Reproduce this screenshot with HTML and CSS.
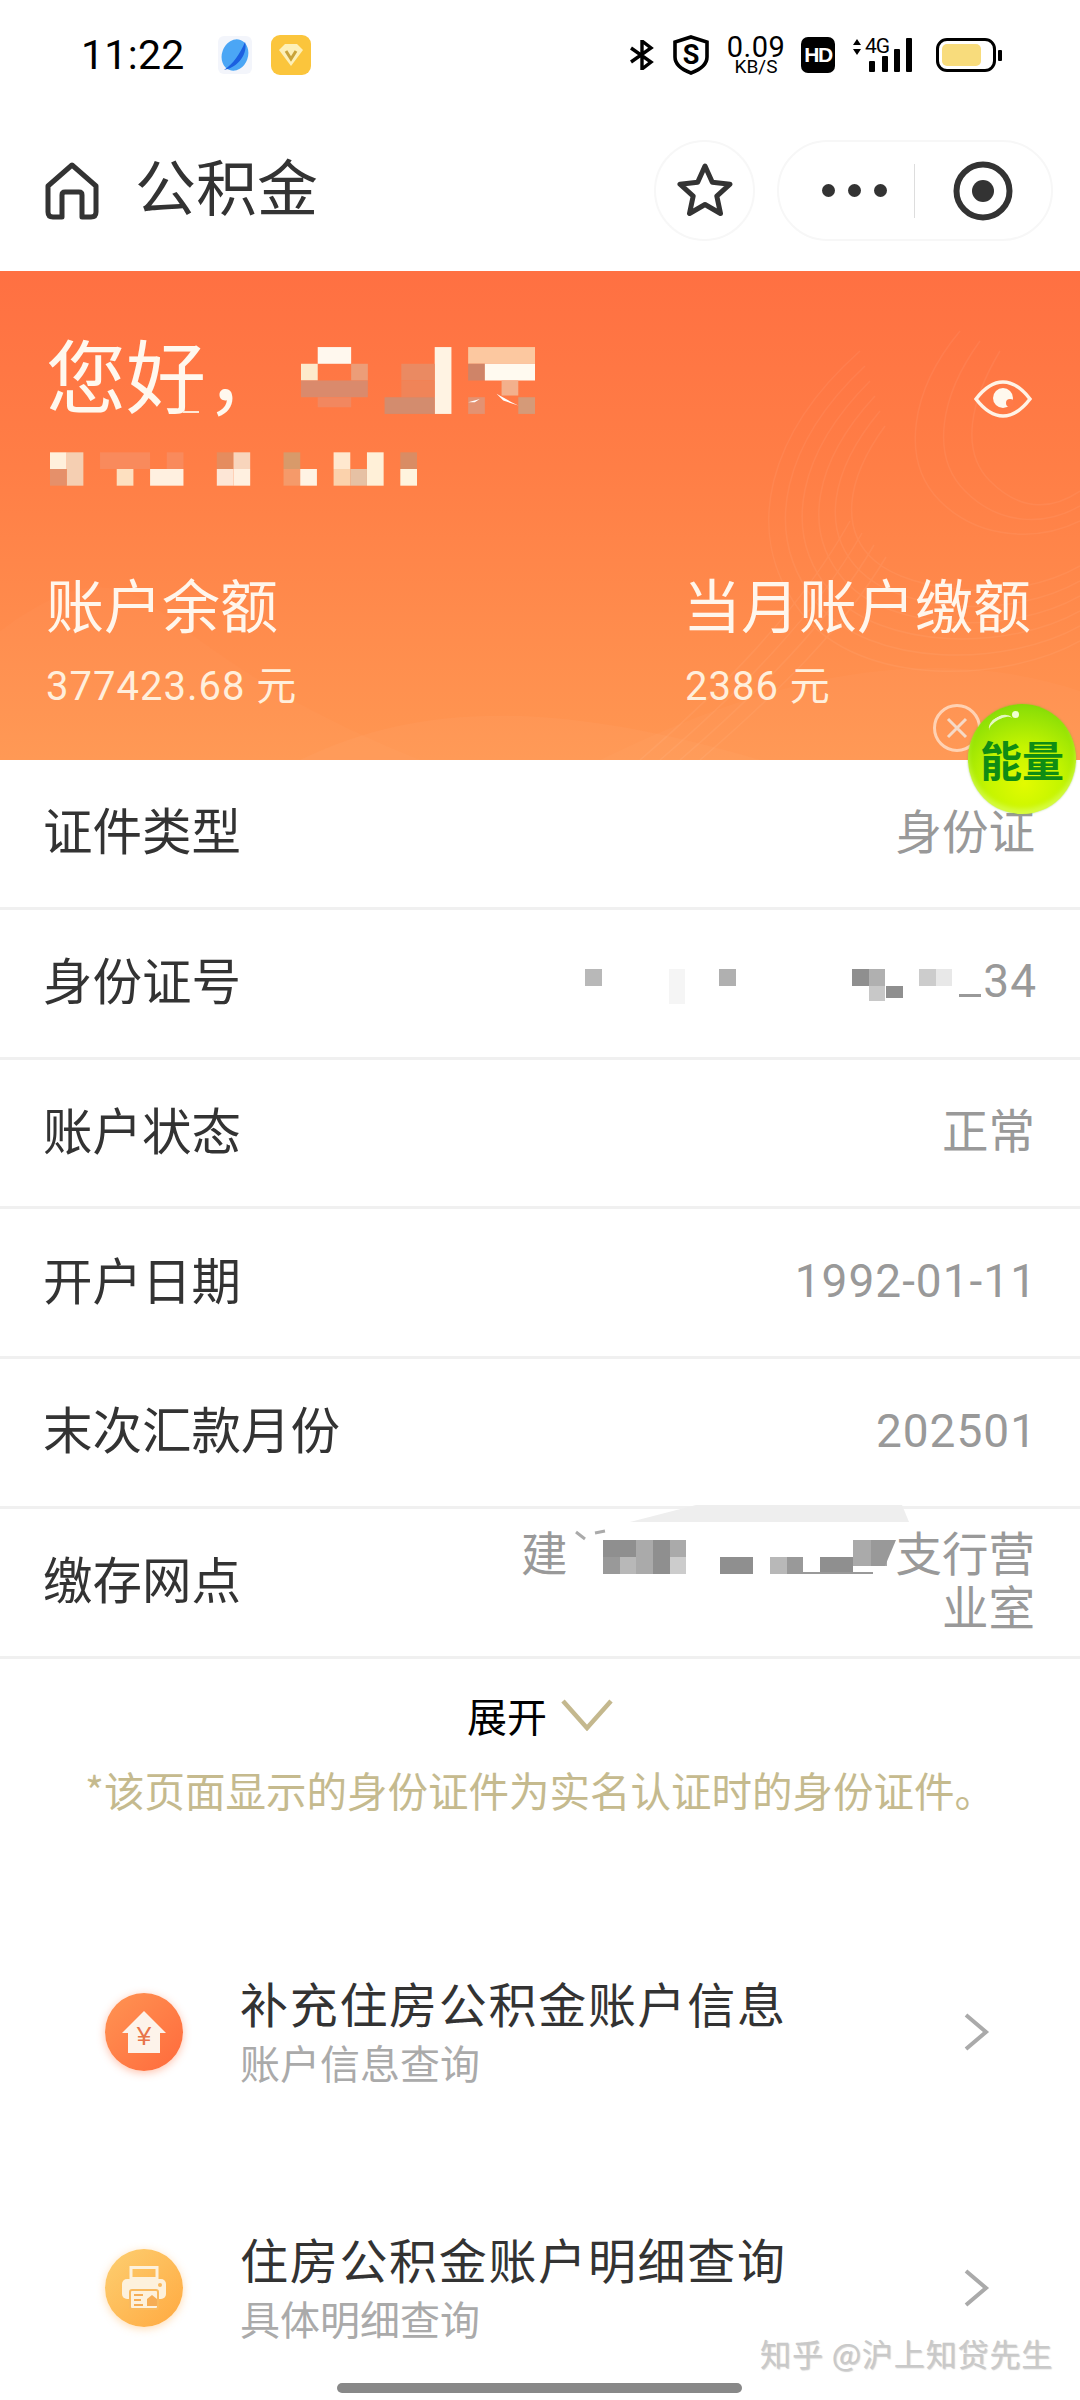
FILE: index.html
```html
<!DOCTYPE html>
<html lang="zh-CN">
<head>
<meta charset="utf-8">
<title>公积金</title>
<link rel="stylesheet" href="styles.css">
</head>
<body>
<div class="page">
  <header class="status">
    <span class="time">11:22</span>
    <svg class="app-planet" width="36" height="40" viewBox="0 0 36 40">
      <rect x="1" y="1" width="34" height="38" rx="6" fill="#f3f5fb"/>
      <ellipse cx="18" cy="20" rx="13" ry="16" fill="#4ba6f5" transform="rotate(20 18 20)"/>
      <path d="M28 7C31 18 22 32 7 35c9-6 16-16 21-28z" fill="#1b5fe0"/>
    </svg>
    <svg class="app-gem" width="40" height="40" viewBox="0 0 40 40">
      <rect width="40" height="40" rx="9" fill="#fbc53c"/>
      <path d="M8 15l6-6h12l6 6-12 16z" fill="#fdf0b8"/>
      <path d="M15 16l5 8 5-8" fill="none" stroke="#c9a33a" stroke-width="3"/>
    </svg>
    <div class="status-right">
      <svg class="st-bt" width="26" height="30" viewBox="0 0 26 30"><path d="M2 8l20 14-9 7V1l9 7L2 22" fill="none" stroke="#000" stroke-width="3.4"/></svg>
      <svg class="st-shield" width="36" height="40" viewBox="0 0 36 40"><path d="M18 2l16 5v15c0 8-8 13-16 16C10 35 2 30 2 22V7z" fill="none" stroke="#000" stroke-width="3.6"/><text x="18" y="29" class="st-s">S</text></svg>
      <div class="speed"><span class="speed-n">0.09</span><span class="speed-u">KB/S</span></div>
      <span class="hd">HD</span>
      <div class="signal">
        <svg class="updown" width="10" height="16" viewBox="0 0 10 16"><path d="M5 0l4 6H1zM5 16l4-6H1z" fill="#000"/></svg>
        <span class="fourg">4G</span>
        <svg class="bars" width="44" height="34" viewBox="0 0 44 34"><rect x="0" y="23" width="6" height="11" rx="1"/><rect x="13" y="18" width="6" height="16" rx="1"/><rect x="25" y="11" width="6" height="23" rx="1"/><rect x="37" y="0" width="6" height="34" rx="1"/></svg>
      </div>
      <div class="battery"><span class="battery-fill"></span></div>
      <span class="battery-tip"></span>
    </div>
  </header>

  <nav class="nav">
    <svg class="nav-home" width="54" height="58" viewBox="0 0 54 58"><path d="M27 3L3 24v26q0 5 5 5h9V33q0-3 3-3h14q3 0 3 3v22h9q5 0 5-5V24z" fill="none" stroke="#333" stroke-width="5" stroke-linejoin="round"/></svg>
    <h1 class="nav-title">公积金</h1>
    <div class="pill-star">
      <svg width="56" height="58" viewBox="0 0 56 58"><path d="M28 4l7.3 16.2 17.7 2-13.200 11.900 3.700 17.400L28 42.500l-15.500 9 3.700-17.400L3 22.200l17.700-2z" fill="none" stroke="#333" stroke-width="5" stroke-linejoin="round"/></svg>
    </div>
    <div class="pill-menu">
      <div class="dots"><i></i><i></i><i></i></div>
      <span class="pill-div"></span>
      <svg width="60" height="60" viewBox="0 0 60 60"><circle cx="30" cy="30" r="26.500" fill="none" stroke="#333" stroke-width="6"/><circle cx="30" cy="30" r="11" fill="#333"/></svg>
    </div>
  </nav>

  <section class="hero">
    <svg class="hero-waves" width="1080" height="489" viewBox="0 0 1080 489">
      <g fill="none" stroke="#fff" stroke-width="1.500" opacity=".05">
        <path d="M860 80C770 160 740 260 800 340s210 70 280 30"/>
        <path d="M865 95C785 170 760 260 815 330s195 65 265 25"/>
        <path d="M870 110C800 180 780 260 830 320s180 60 250 20"/>
        <path d="M875 125C815 190 800 260 845 310s165 55 235 15"/>
        <path d="M880 140C830 200 820 260 860 300s150 50 220 10"/>
        <path d="M885 155C845 210 840 260 875 290s135 45 205 5"/>
        <path d="M960 60c-50 60-60 130-20 170s100 40 140 20"/>
        <path d="M980 70c-40 55-50 115-15 150s80 35 115 15"/>
        <path d="M1000 80c-30 50-40 100-10 130s60 30 90 10"/>
        <path d="M640 489C720 420 800 340 850 250"/>
        <path d="M660 489C740 420 815 345 862 262"/>
        <path d="M680 489C760 420 830 350 874 274"/>
        <path d="M700 489C780 420 845 355 886 286"/>
      </g>
      <path d="M300 489C420 430 560 430 760 489z" fill="#fff" opacity=".03"/>
      <path d="M0 360C80 300 120 310 160 340 240 400 300 440 420 489H0z" fill="#fff" opacity=".02"/>
      <path d="M600 489C720 430 900 360 1080 420v69z" fill="#fff" opacity=".025"/>
    </svg>
    <div class="hero-top">
      <div class="greet">
        <span class="greet-text">您好，</span>
        <svg class="mosaic-name" width="234" height="67" viewBox="0 0 14 4">
          <rect x="1" y="0" width="2" height="1" fill="#fff8ee"/>
          <rect x="8" y="0" width="1" height="4" fill="#fff3e3"/>
          <rect x="10" y="0" width="4" height="1" fill="#fcc8a0"/>
          <rect x="0" y="1" width="1" height="1" fill="#fdeacb"/>
          <rect x="3" y="1" width="1" height="1" fill="#ec9d78"/>
          <rect x="6" y="1" width="2" height="1" fill="#ea8a62"/>
          <rect x="10" y="1" width="1" height="1" fill="#cf8468"/>
          <rect x="11" y="1" width="3" height="1" fill="#fffaf0"/>
          <rect x="0" y="2" width="4" height="1" fill="#da8a6c"/>
          <rect x="6" y="2" width="2" height="1" fill="#f08458"/>
          <rect x="12" y="2" width="1" height=".9" fill="#f3b08c"/>
          <rect x="1" y="3" width="2" height=".6" fill="#f2875f"/>
          <rect x="5" y="3" width="3" height="1" fill="#d38c6e"/>
          <rect x="10" y="3" width="1" height="1" fill="#e39272"/>
          <rect x="13" y="3" width="1" height="1" fill="#d59a78"/>
          <path d="M11.700 2.800l.9 .5 .4 .2-.9-.3z" fill="#fff"/>
          <path d="M10 3.300l.7-.2-.3 .2z" fill="#fff"/>
        </svg>
      </div>
      <svg class="eye" width="58" height="38" viewBox="0 0 58 38"><path d="M2 19C12 6 20 2 29 2s17 4 27 17C46 32 38 36 29 36S12 32 2 19z" fill="none" stroke="#fff3e6" stroke-width="3.500"/><circle cx="29" cy="18" r="10" fill="#fff8ee"/><circle cx="36" cy="23" r="4" fill="#ff7a48"/></svg>
    </div>
    <svg class="mosaic-no" width="367" height="34" viewBox="0 0 22 2">
      <rect x="0" y="0" width="1" height="1" fill="#fff0dc"/><rect x="1" y="0" width="1" height="2" fill="#f5cfb2"/>
      <rect x="3" y="0" width="3" height="1" fill="#f98a5c"/><rect x="7" y="0" width="1" height="1" fill="#f98a5c"/>
      <rect x="10" y="0" width="1" height="1" fill="#e58c5e"/><rect x="11" y="0" width="1" height="1" fill="#f8d5bc"/>
      <rect x="14" y="0" width="1" height="1" fill="#d89a6a"/><rect x="17" y="0" width="1" height="1" fill="#ffe8cf"/>
      <rect x="19" y="0" width="1" height="2" fill="#fff0d8"/><rect x="21" y="0" width="1" height="1" fill="#d98c64"/>
      <rect x="0" y="1" width="1" height="1" fill="#e5906a"/><rect x="4" y="1" width="1" height="1" fill="#fde0c0"/>
      <rect x="6" y="1" width="2" height="1" fill="#fff0e0"/><rect x="10" y="1" width="1" height="1" fill="#fde6d6"/>
      <rect x="11" y="1" width="1" height="1" fill="#fff0e0"/><rect x="14" y="1" width="1" height="1" fill="#f59a6a"/>
      <rect x="15" y="1" width="1" height="1" fill="#fff3e4"/><rect x="17" y="1" width="1" height="1" fill="#fbd2ac"/>
      <rect x="18" y="1" width="1" height="1" fill="#e6c1a4"/><rect x="21" y="1" width="1" height="1" fill="#fff4de"/>
    </svg>
    <div class="hero-stats">
      <div class="stat">
        <div class="stat-label">账户余额</div>
        <div class="stat-value">377423.68 元</div>
      </div>
      <div class="stat">
        <div class="stat-label">当月账户缴额</div>
        <div class="stat-value">2386 元</div>
      </div>
    </div>
  </section>

  <div class="float-close"><svg width="24" height="24" viewBox="0 0 24 24"><path d="M3 3l18 18M21 3L3 21" stroke="#f5d9c6" stroke-width="3"/></svg></div>
  <div class="float-ball"><span class="ball-text">能量</span></div>

  <section class="rows">
    <div class="row"><span class="row-label">证件类型</span><span class="row-value">身份证</span></div>
    <div class="row">
      <span class="row-label">身份证号</span>
      <span class="row-value row-id">
        <svg class="mosaic-id" width="398" height="46" viewBox="0 0 398 46">
          <rect x="0" y="11" width="17" height="17" fill="#b8b8b8"/>
          <rect x="84" y="11" width="16" height="35" fill="#f5f5f5"/>
          <rect x="134" y="11" width="17" height="17" fill="#b0b0b0"/>
          <rect x="267" y="11" width="17" height="17" fill="#8f8f8f"/>
          <rect x="284" y="11" width="16" height="17" fill="#b0b0b0"/>
          <rect x="284" y="28" width="16" height="15" fill="#c8c8c8"/>
          <rect x="301" y="28" width="17" height="12" fill="#8f8f8f"/>
          <rect x="334" y="11" width="17" height="17" fill="#cccccc"/>
          <rect x="351" y="11" width="16" height="17" fill="#e8e8e8"/>
          <rect x="374" y="36" width="22" height="3" fill="#999"/>
        </svg>34
      </span>
    </div>
    <div class="row"><span class="row-label">账户状态</span><span class="row-value">正常</span></div>
    <div class="row"><span class="row-label">开户日期</span><span class="row-value row-num">1992-01-11</span></div>
    <div class="row"><span class="row-label">末次汇款月份</span><span class="row-value row-num">202501</span></div>
    <div class="row">
      <span class="row-label">缴存网点</span>
      <div class="row-value row-branch">
        <div class="branch-line">建<svg class="mosaic-branch" width="328" height="54" viewBox="0 0 328 54">
          <path d="M62-2L128-19H334L341-2z" fill="#eeeeee"/>
          <path d="M8 8l9 7M27 9l10-2" fill="none" stroke="#aaa" stroke-width="3"/>
          <rect x="35" y="16" width="33" height="17" fill="#8f8f8f"/><rect x="68" y="16" width="17" height="17" fill="#aaaaaa"/>
          <rect x="85" y="16" width="17" height="17" fill="#8f8f8f"/><rect x="102" y="16" width="16" height="17" fill="#aaaaaa"/>
          <rect x="35" y="33" width="17" height="17" fill="#999999"/><rect x="52" y="33" width="16" height="17" fill="#b8b8b8"/>
          <rect x="68" y="33" width="17" height="17" fill="#aaaaaa"/><rect x="85" y="33" width="17" height="17" fill="#8f8f8f"/>
          <rect x="102" y="33" width="16" height="17" fill="#cccccc"/>
          <rect x="152" y="33" width="33" height="17" fill="#8f8f8f"/>
          <rect x="202" y="33" width="17" height="17" fill="#b8b8b8"/><rect x="219" y="33" width="16" height="17" fill="#999999"/>
          <rect x="252" y="33" width="33" height="17" fill="#8f8f8f"/>
          <rect x="235" y="48" width="70" height="2" fill="#999999"/>
          <rect x="285" y="16" width="34" height="26" fill="#aaaaaa"/><path d="M303 16h25l-11 26h-14z" fill="#999999"/>
        </svg>支行营</div>
        <div class="branch-line">业室</div>
      </div>
    </div>
  </section>

  <div class="expand">
    <span class="expand-text">展开</span>
    <svg width="52" height="32" viewBox="0 0 52 32"><path d="M2 2l24 27L50 2" fill="none" stroke="#c4b88e" stroke-width="4.500"/></svg>
  </div>
  <p class="note">*该页面显示的身份证件为实名认证时的身份证件。</p>

  <section class="links">
    <div class="link">
      <div class="link-icon icon-red">
        <svg width="46" height="46" viewBox="0 0 46 46">
          <path d="M23 2L1 24h6v20h32V24h6z" fill="#fdf3ea"/>
          <text x="23" y="36" class="icon-yen">¥</text>
        </svg>
      </div>
      <div class="link-body">
        <div class="link-title">补充住房公积金账户信息</div>
        <div class="link-sub">账户信息查询</div>
      </div>
      <svg class="link-arrow" width="26" height="38" viewBox="0 0 26 38"><path d="M2 2l20 17L2 36" fill="none" stroke="#aaa" stroke-width="4"/></svg>
    </div>
    <div class="link">
      <div class="link-icon icon-yellow">
        <svg width="46" height="44" viewBox="0 0 46 44">
          <rect x="10" y="1.500" width="26" height="11" fill="none" stroke="#fdf1dc" stroke-width="3"/>
          <rect x="1" y="13" width="44" height="20" rx="5" fill="#fdf1dc"/>
          <circle cx="39" cy="19" r="2" fill="#f9b95e"/>
          <rect x="9" y="24" width="28" height="19" rx="2" fill="#fdf1dc" stroke="#f9b95e" stroke-width="2"/>
          <path d="M13 29h9M13 34h7M13 39h9" stroke="#f6ad55" stroke-width="2"/>
          <path d="M26 33l5-4 5 4v7H26z" fill="#f6ad55"/>
        </svg>
      </div>
      <div class="link-body">
        <div class="link-title">住房公积金账户明细查询</div>
        <div class="link-sub">具体明细查询</div>
      </div>
      <svg class="link-arrow" width="26" height="38" viewBox="0 0 26 38"><path d="M2 2l20 17L2 36" fill="none" stroke="#aaa" stroke-width="4"/></svg>
    </div>
  </section>

  <div class="watermark">知乎 @沪上知贷先生</div>
  <div class="home-bar"></div>
</div>
</body>
</html>
```
FILE: styles.css
```css
* { box-sizing: border-box; }
html, body { margin: 0; padding: 0; background: #fff; }
body { font-family: "Noto Sans CJK SC", "Noto Sans", sans-serif; color: #333; }
.page { position: relative; width: 1080px; height: 2400px; overflow: hidden; background: #fff; }

/* status bar */
.status { height: 110px; display: flex; align-items: center; padding: 0 78px 0 81px; color: #000; }
.time { font-family: Roboto, sans-serif; font-size: 41px; width: 136px; letter-spacing: .3px; }
.app-planet { margin-right: 18px; }
.status-right { margin-left: auto; display: flex; align-items: center; }
.st-bt { margin-right: 1px; }
.st-shield { margin-left: 17px; }
.st-s { font-family: Roboto, sans-serif; font-size: 27px; font-weight: 700; text-anchor: middle; fill: #000; }
.speed { display: flex; flex-direction: column; align-items: center; margin-left: 18px; width: 58px; font-family: Roboto, sans-serif; line-height: 1; }
.speed-n { font-size: 29px; height: 24px; letter-spacing: .5px; line-height: 24px; }
.speed-u { font-size: 19px; height: 16px; line-height: 16px; }
.hd { width: 34px; height: 36px; margin-left: 16px; background: #000; color: #fff; border-radius: 7px; font: 700 21px/36px "Liberation Sans", sans-serif; letter-spacing: -1.500px; text-align: center; }
.signal { position: relative; width: 66px; height: 36px; margin-left: 17px; }
.updown { position: absolute; left: 0; top: 2px; }
.fourg { position: absolute; left: 13px; top: 0; font: 400 21px/18px Roboto, sans-serif; letter-spacing: -1px; }
.bars { position: absolute; left: 17px; top: 1px; fill: #000; }
.battery { width: 60px; height: 34px; margin-left: 18px; border: 3.500px solid #000; border-radius: 11px; padding: 3px; }
.battery-fill { display: block; width: 39px; height: 100%; background: #f8dc7c; border-radius: 5px; }
.battery-tip { width: 4px; height: 11px; margin-left: 2px; background: #000; border-radius: 1px; }

/* nav */
.nav { height: 161px; display: flex; align-items: center; padding: 0 27px 0 45px; }
.nav-home { flex: none; }
.nav-title { margin: 0 0 12px 36px; font-size: 61px; font-weight: 400; line-height: 1; color: #333; }
.pill-star { margin-left: auto; width: 101px; height: 101px; display: flex; align-items: center; justify-content: center; border: 2px solid #f7f7f7; border-radius: 50%; }
.pill-menu { width: 276px; height: 101px; margin-left: 22px; display: flex; align-items: center; border: 2px solid #f7f7f7; border-radius: 51px; padding-left: 43px; }
.dots { display: flex; gap: 13px; }
.dots i { width: 13px; height: 13px; border-radius: 50%; background: #333; }
.pill-div { width: 1px; height: 54px; margin-left: 27px; background: #ddd; }
.pill-menu svg { margin-left: 38px; }

/* hero */
.hero { position: relative; height: 489px; padding: 62px 49px 0 46px; color: #fff6ec; background: linear-gradient(180deg, #ff7042 0%, #ff7e46 40%, #ff9752 100%); }
.hero-waves { position: absolute; left: 0; top: 0; }
.hero-top { position: relative; display: flex; justify-content: space-between; align-items: center; height: 90px; margin-right: -3px; }
.greet { position: relative; display: flex; align-items: center; }
.greet::after { content: ""; position: absolute; left: 137px; top: 84px; width: 16px; height: 2px; background: #ffe8d6; }
.greet-text { font-size: 80px; line-height: 90px; margin-bottom: 12px; color: #fff8ee; width: 255px; }
.mosaic-name { margin-top: 5px; }
.eye { margin: 42px 2px 0 0; }
.mosaic-no { position: relative; display: block; margin: 29px 0 0 4px; }
.hero-stats { position: relative; display: flex; justify-content: space-between; margin-top: 77px; }
.stat-label { font-size: 58px; line-height: 80px; }
.stat-value { font-family: Roboto, "Noto Sans CJK SC", sans-serif; font-size: 40px; line-height: 56px; margin-top: 16px; letter-spacing: 1px; color: #ffefdc; }
.stat:last-child { width: 348px; }
.stat:last-child .stat-value { margin-left: 2px; }

/* floating */
.float-close { position: absolute; left: 933px; top: 704px; width: 48px; height: 48px; border: 3.500px solid rgba(255,235,220,.7); border-radius: 50%; display: flex; align-items: center; justify-content: center; z-index: 2; }
.float-close svg { width: 24px; height: 24px; }
.float-ball { position: absolute; left: 968px; top: 704px; width: 108px; height: 110px; border-radius: 50%; background: radial-gradient(circle at 52% 72%, #e2fb00 0%, #c4f500 38%, #8fe006 75%, #74d00a 92%, #a4e830 100%); display: flex; align-items: center; justify-content: center; z-index: 3; box-shadow: 0 0 2px rgba(120,180,40,.7), inset 0 -5px 5px rgba(225,255,110,.6); }
.float-ball::before { content: ""; position: absolute; left: 20px; top: 12px; width: 26px; height: 14px; border-top: 3px solid rgba(255,255,255,.75); border-radius: 50%; transform: rotate(-28deg); }
.float-ball::after { content: ""; position: absolute; left: 44px; top: 7px; width: 7px; height: 7px; background: #f1ffd0; border-radius: 50%; }
.ball-text { font-size: 42px; font-weight: 700; line-height: 1; color: #0f8c14; letter-spacing: 0; }

/* rows */
.rows { display: flex; flex-direction: column; }
.row { height: 149.800px; display: flex; align-items: center; justify-content: space-between; padding: 0 45px 9px 43px; border-bottom: 3px solid #f0f0f0; }
.row-label { font-size: 49.500px; line-height: 1; color: #333; flex: none; }
.row-value { font-size: 46.500px; line-height: 54px; color: #999; text-align: right; }
.row-num { font-family: Roboto, sans-serif; font-size: 46px; letter-spacing: 1px; padding-top: 6px; margin-right: -2px; }
.row-id { display: flex; align-items: center; font-family: Roboto, sans-serif; font-size: 46px; letter-spacing: 1px; padding-top: 4px; margin-right: -2px; }
.row-branch { display: flex; flex-direction: column; align-items: flex-end; }
.branch-line { display: flex; align-items: center; height: 54px; }
.mosaic-branch { overflow: visible; }

/* expand + note */
.expand { height: 78px; margin-top: 17px; display: flex; align-items: center; justify-content: center; gap: 14px; }
.expand-text { font-size: 40px; line-height: 1; color: #000; }
.note { margin: 0; height: 75px; padding-top: 11px; text-align: center; font-size: 40.500px; line-height: 50px; color: #c5ba8e; white-space: nowrap; }

/* links */
.links { margin-top: 75px; display: flex; flex-direction: column; }
.link { height: 256px; display: flex; align-items: center; padding: 0 90px 0 105px; }
.link-icon { width: 78px; height: 78px; border-radius: 50%; display: flex; align-items: center; justify-content: center; flex: none; }
.icon-red { background: linear-gradient(135deg, #ff9453, #ff6a3c); box-shadow: 0 2px 8px rgba(255,120,70,.45); }
.icon-yellow { background: linear-gradient(135deg, #fdcf71, #ffa940); box-shadow: 0 2px 8px rgba(255,180,90,.45); }
.icon-yen { font-family: "Liberation Sans", sans-serif; font-size: 26px; text-anchor: middle; fill: #e8744a; }
.link-body { margin-left: 57px; flex: 1; display: flex; flex-direction: column; }
.link-title { font-size: 48px; line-height: 60px; letter-spacing: 1.700px; color: #333; white-space: nowrap; }
.link-sub { font-size: 40px; line-height: 60px; color: #aaa; }
.link-arrow { flex: none; }

/* overlays */
.watermark { position: absolute; left: 760px; top: 2333px; font-size: 31px; line-height: 40px; letter-spacing: .9px; color: #c9c9c9; text-shadow: 1px 1px 1px rgba(120,120,120,.35); white-space: nowrap; }
.home-bar { position: absolute; left: 337px; bottom: 7px; width: 405px; height: 10px; background: #888; border-radius: 5px; }
```
